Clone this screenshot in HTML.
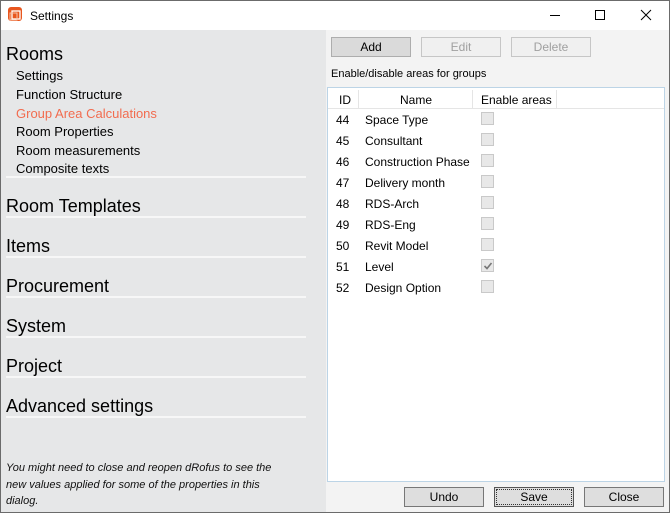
<!DOCTYPE html>
<html><head><meta charset="utf-8"><style>
*{margin:0;padding:0;box-sizing:border-box}
body{width:670px;height:513px;overflow:hidden;font-family:"Liberation Sans",sans-serif;background:#fff;position:relative}
.win{position:absolute;left:0;top:0;width:670px;height:513px;border:1px solid #6b6b6b}
.t{position:absolute;white-space:nowrap;color:#000}
.left{position:absolute;left:1px;top:30px;width:325px;height:482px;background:#e6e7e8}
.right{position:absolute;left:326px;top:30px;width:343px;height:482px;background:#f3f3f3}
.sep{position:absolute;left:6px;width:300px;height:2px;background:#f7f7f7}
.h{font-size:18px;left:6px}
.s{font-size:13px;left:16px}
.btn{position:absolute;height:20px;border:1px solid #adadad;background:#e1e1e1;font-size:12px;text-align:center;line-height:18px}
.dis{background:#f0f0f0;border-color:#c6c6c6;color:#a0a0a0}
.grid{position:absolute;left:327px;top:87px;width:338px;height:395px;background:#fff;border:1px solid #bcd4e6}
.cb{position:absolute;left:481px;width:13px;height:13px;border:1px solid #c9c9c9;background:#e8e8e8}
.r{font-size:12px}
</style></head><body>
<div class="win"></div>
<svg style="position:absolute;left:8px;top:7px" width="16" height="16" viewBox="0 0 16 16"><rect x="0" y="0" width="14" height="14" rx="3" fill="#e8561e"/><rect x="4" y="4" width="8" height="8" fill="none" stroke="#fff" stroke-width="1.3"/><rect x="2" y="6" width="7" height="7" fill="none" stroke="#f9c3a8" stroke-width="1"/></svg>
<div class="t" style="left:30px;top:9px;font-size:12px">Settings</div>
<div style="position:absolute;left:550px;top:15px;width:10px;height:1px;background:#000"></div>
<div style="position:absolute;left:595px;top:10px;width:10px;height:10px;border:1px solid #000"></div>
<svg style="position:absolute;left:640px;top:9px" width="12" height="12"><path d="M1 1L11 11M11 1L1 11" stroke="#000" stroke-width="1"/></svg>

<div class="left"></div>
<div class="right"></div>
<div class="t h" style="top:44px">Rooms</div>
<div class="t s" style="top:68px">Settings</div>
<div class="t s" style="top:87px">Function Structure</div>
<div class="t s" style="top:106px;color:#f26c4f">Group Area Calculations</div>
<div class="t s" style="top:124px">Room Properties</div>
<div class="t s" style="top:143px">Room measurements</div>
<div class="t s" style="top:161px">Composite texts</div>
<div class="sep" style="top:176px"></div>
<div class="t h" style="top:196px">Room Templates</div>
<div class="sep" style="top:216px"></div>
<div class="t h" style="top:236px">Items</div>
<div class="sep" style="top:256px"></div>
<div class="t h" style="top:276px">Procurement</div>
<div class="sep" style="top:296px"></div>
<div class="t h" style="top:316px">System</div>
<div class="sep" style="top:336px"></div>
<div class="t h" style="top:356px">Project</div>
<div class="sep" style="top:376px"></div>
<div class="t h" style="top:396px">Advanced settings</div>
<div class="sep" style="top:416px"></div>
<div class="t" style="left:6px;top:460px;font-size:11px;font-style:italic;line-height:16.5px;color:#111">You might need to close and reopen dRofus to see the<br>new values applied for some of the properties in this<br>dialog.</div>

<div class="btn" style="left:331px;top:37px;width:80px;background:#dadada">Add</div>
<div class="btn dis" style="left:421px;top:37px;width:80px">Edit</div>
<div class="btn dis" style="left:511px;top:37px;width:80px">Delete</div>
<div class="t" style="left:331px;top:68px;font-size:11px">Enable/disable areas for groups</div>
<div class="grid"></div>
<div style="position:absolute;left:328px;top:108px;width:336px;height:1px;background:#e5e5e5"></div>
<div style="position:absolute;left:358px;top:90px;width:1px;height:18px;background:#e5e5e5"></div>
<div style="position:absolute;left:472px;top:90px;width:1px;height:18px;background:#e5e5e5"></div>
<div style="position:absolute;left:556px;top:90px;width:1px;height:18px;background:#e5e5e5"></div>
<div class="t r" style="left:339px;top:93px">ID</div>
<div class="t r" style="left:400px;top:93px">Name</div>
<div class="t r" style="left:481px;top:93px">Enable areas</div>

<div class="t r" style="left:336px;top:113px">44</div><div class="t r" style="left:365px;top:113px">Space Type</div><div class="cb" style="top:112px"></div>
<div class="t r" style="left:336px;top:134px">45</div><div class="t r" style="left:365px;top:134px">Consultant</div><div class="cb" style="top:133px"></div>
<div class="t r" style="left:336px;top:155px">46</div><div class="t r" style="left:365px;top:155px">Construction Phase</div><div class="cb" style="top:154px"></div>
<div class="t r" style="left:336px;top:176px">47</div><div class="t r" style="left:365px;top:176px">Delivery month</div><div class="cb" style="top:175px"></div>
<div class="t r" style="left:336px;top:197px">48</div><div class="t r" style="left:365px;top:197px">RDS-Arch</div><div class="cb" style="top:196px"></div>
<div class="t r" style="left:336px;top:218px">49</div><div class="t r" style="left:365px;top:218px">RDS-Eng</div><div class="cb" style="top:217px"></div>
<div class="t r" style="left:336px;top:239px">50</div><div class="t r" style="left:365px;top:239px">Revit Model</div><div class="cb" style="top:238px"></div>
<div class="t r" style="left:336px;top:260px">51</div><div class="t r" style="left:365px;top:260px">Level</div><div class="cb" style="top:259px"><svg style="position:absolute;left:1px;top:1px" width="10" height="10"><path d="M1.5 5L4 7.5L8.5 2" stroke="#777" stroke-width="1.6" fill="none"/></svg></div>
<div class="t r" style="left:336px;top:281px">52</div><div class="t r" style="left:365px;top:281px">Design Option</div><div class="cb" style="top:280px"></div>

<div class="btn" style="left:404px;top:487px;width:80px;border-color:#777;background:#dedede">Undo</div>
<div class="btn" style="left:494px;top:487px;width:80px;border-color:#555;background:#dedede;outline:1px dotted #333;outline-offset:-3px">Save</div>
<div class="btn" style="left:584px;top:487px;width:80px;border-color:#777;background:#dedede">Close</div>
</body></html>
